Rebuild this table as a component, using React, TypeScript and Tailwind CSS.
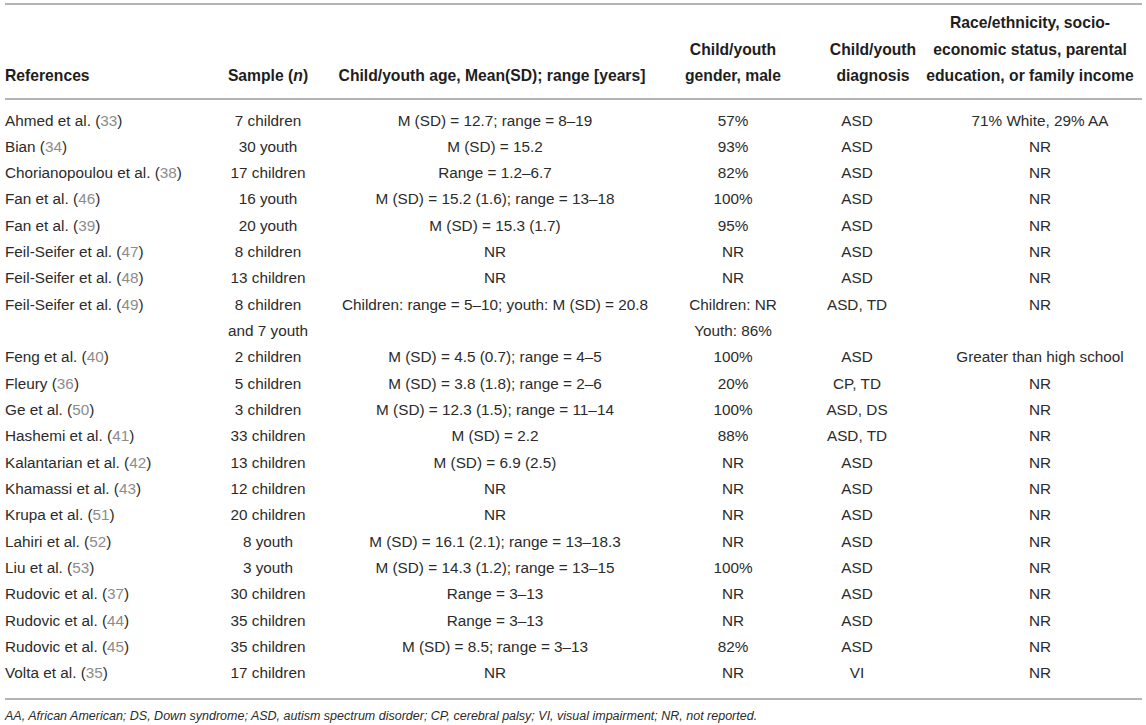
import React from "react";

type Row = {
  ref: string;
  num: string;
  sample: string[];
  age: string;
  gender: string[];
  diag: string;
  race: string;
};

const rows: Row[] = [
  { ref: "Ahmed et al.", num: "33", sample: ["7 children"], age: "M (SD) = 12.7; range = 8–19", gender: ["57%"], diag: "ASD", race: "71% White, 29% AA" },
  { ref: "Bian", num: "34", sample: ["30 youth"], age: "M (SD) = 15.2", gender: ["93%"], diag: "ASD", race: "NR" },
  { ref: "Chorianopoulou et al.", num: "38", sample: ["17 children"], age: "Range = 1.2–6.7", gender: ["82%"], diag: "ASD", race: "NR" },
  { ref: "Fan et al.", num: "46", sample: ["16 youth"], age: "M (SD) = 15.2 (1.6); range = 13–18", gender: ["100%"], diag: "ASD", race: "NR" },
  { ref: "Fan et al.", num: "39", sample: ["20 youth"], age: "M (SD) = 15.3 (1.7)", gender: ["95%"], diag: "ASD", race: "NR" },
  { ref: "Feil-Seifer et al.", num: "47", sample: ["8 children"], age: "NR", gender: ["NR"], diag: "ASD", race: "NR" },
  { ref: "Feil-Seifer et al.", num: "48", sample: ["13 children"], age: "NR", gender: ["NR"], diag: "ASD", race: "NR" },
  { ref: "Feil-Seifer et al.", num: "49", sample: ["8 children", "and 7 youth"], age: "Children: range = 5–10; youth: M (SD) = 20.8", gender: ["Children: NR", "Youth: 86%"], diag: "ASD, TD", race: "NR" },
  { ref: "Feng et al.", num: "40", sample: ["2 children"], age: "M (SD) = 4.5 (0.7); range = 4–5", gender: ["100%"], diag: "ASD", race: "Greater than high school" },
  { ref: "Fleury", num: "36", sample: ["5 children"], age: "M (SD) = 3.8 (1.8); range = 2–6", gender: ["20%"], diag: "CP, TD", race: "NR" },
  { ref: "Ge et al.", num: "50", sample: ["3 children"], age: "M (SD) = 12.3 (1.5); range = 11–14", gender: ["100%"], diag: "ASD, DS", race: "NR" },
  { ref: "Hashemi et al.", num: "41", sample: ["33 children"], age: "M (SD) = 2.2", gender: ["88%"], diag: "ASD, TD", race: "NR" },
  { ref: "Kalantarian et al.", num: "42", sample: ["13 children"], age: "M (SD) = 6.9 (2.5)", gender: ["NR"], diag: "ASD", race: "NR" },
  { ref: "Khamassi et al.", num: "43", sample: ["12 children"], age: "NR", gender: ["NR"], diag: "ASD", race: "NR" },
  { ref: "Krupa et al.", num: "51", sample: ["20 children"], age: "NR", gender: ["NR"], diag: "ASD", race: "NR" },
  { ref: "Lahiri et al.", num: "52", sample: ["8 youth"], age: "M (SD) = 16.1 (2.1); range = 13–18.3", gender: ["NR"], diag: "ASD", race: "NR" },
  { ref: "Liu et al.", num: "53", sample: ["3 youth"], age: "M (SD) = 14.3 (1.2); range = 13–15", gender: ["100%"], diag: "ASD", race: "NR" },
  { ref: "Rudovic et al.", num: "37", sample: ["30 children"], age: "Range = 3–13", gender: ["NR"], diag: "ASD", race: "NR" },
  { ref: "Rudovic et al.", num: "44", sample: ["35 children"], age: "Range = 3–13", gender: ["NR"], diag: "ASD", race: "NR" },
  { ref: "Rudovic et al.", num: "45", sample: ["35 children"], age: "M (SD) = 8.5; range = 3–13", gender: ["82%"], diag: "ASD", race: "NR" },
  { ref: "Volta et al.", num: "35", sample: ["17 children"], age: "NR", gender: ["NR"], diag: "VI", race: "NR" },
];

const grid = "grid grid-cols-[200px_126px_328px_148px_111px_224px]";

function Lines({ items }: { items: string[] }) {
  return (
    <>
      {items.map((t, i) => (
        <div key={i}>{t}</div>
      ))}
    </>
  );
}

export default function App() {
  return (
    <div
      className="w-[1146px] h-[725px] bg-white text-[#2b2b2b] overflow-hidden"
      style={{ fontFamily: '"Liberation Sans", Arial, sans-serif' }}
    >
      <div className="ml-[5px] w-[1137px]">
        <div className="mt-[3px] h-[2px] bg-[#b4b4b4]" />
        <div className={`${grid} items-end pt-[5px] pb-[8px] text-[15.7px] leading-[26.5px] font-bold text-[#1e1e1e]`}>
          <div className="whitespace-nowrap">References</div>
          <div className="text-center whitespace-nowrap">
            Sample (<i>n</i>)
          </div>
          <div className="text-center pr-[6px] whitespace-nowrap">Child/youth age, Mean(SD); range [years]</div>
          <div className="text-center whitespace-nowrap">
            <div>Child/youth</div>
            <div>gender, male</div>
          </div>
          <div className="text-center pl-[21px] whitespace-nowrap">
            <div>Child/youth</div>
            <div>diagnosis</div>
          </div>
          <div className="text-center whitespace-nowrap">
            <div>Race/ethnicity, socio-</div>
            <div>economic status, parental</div>
            <div>education, or family income</div>
          </div>
        </div>
        <div className="h-[2px] bg-[#b4b4b4]" />
        <div className="pt-[8px] pb-[11px] text-[15.3px] leading-[26.33px]">
          {rows.map((r, i) => (
            <div key={i} className={grid}>
              <div className="whitespace-nowrap">
                {r.ref} (<span className="text-[#8c8c8c]">{r.num}</span>)
              </div>
              <div className="text-center whitespace-nowrap">
                <Lines items={r.sample} />
              </div>
              <div className="text-center whitespace-nowrap">{r.age}</div>
              <div className="text-center whitespace-nowrap">
                <Lines items={r.gender} />
              </div>
              <div className="text-center pr-[11px] whitespace-nowrap">{r.diag}</div>
              <div className="text-center pl-[20px] whitespace-nowrap">{r.race}</div>
            </div>
          ))}
        </div>
        <div className="h-[2px] bg-[#b4b4b4]" />
        <div className="pt-[6px] text-[12.5px] leading-[20px] italic text-[#2b2b2b] whitespace-nowrap">
          AA, African American; DS, Down syndrome; ASD, autism spectrum disorder; CP, cerebral palsy; VI, visual impairment; NR, not reported.
        </div>
      </div>
    </div>
  );
}
